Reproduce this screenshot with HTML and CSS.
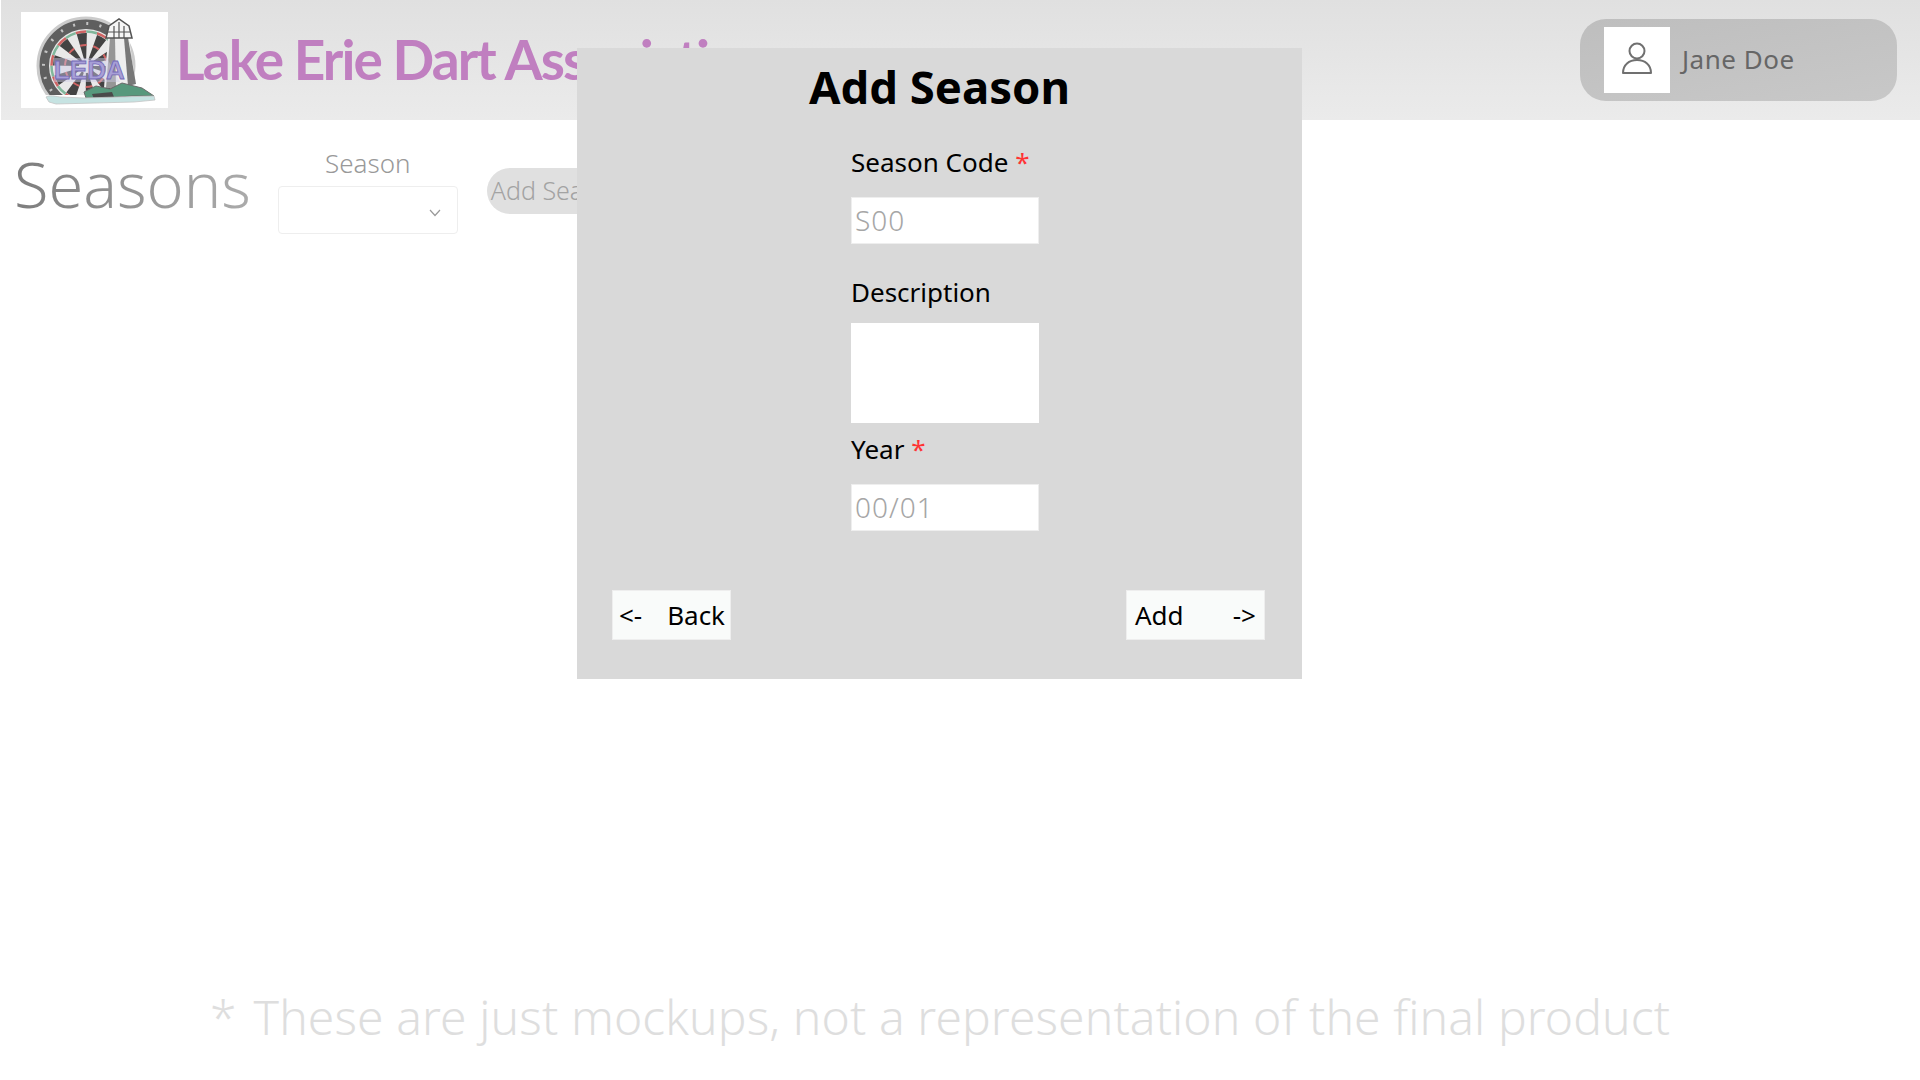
FILE: index.html
```html
<!DOCTYPE html>
<html lang="en">
<head>
    <meta charset="UTF-8">
    <title>Seasons</title>
    <link rel="stylesheet" href="styles.css">
</head>
<body>
    <header class="topbar">
        <div class="logo">
            <svg width="147" height="96" viewBox="0 0 147 96">
                <defs>
                    <filter id="soft"><feGaussianBlur stdDeviation="0.6"/></filter>
                    <clipPath id="boardClip"><rect x="0" y="0" width="147" height="83"/></clipPath>
                </defs>
                <g filter="url(#soft)" transform="translate(-5 0)" opacity=".88">
                    <g clip-path="url(#boardClip)">
                        <circle cx="70" cy="54" r="48" fill="#4a4a4a" stroke="#c4c4c4" stroke-width="3"/>
                        <circle cx="70" cy="54" r="42.500" fill="none" stroke="#bdbdbd" stroke-width="3" stroke-dasharray="2 11.350"/>
                        <circle cx="70" cy="54" r="37" fill="#e6e6e6"/>
                        <circle cx="70" cy="54" r="34.500" fill="none" stroke="#c9504f" stroke-width="2.500" stroke-dasharray="10.840 10.840"/>
                        <circle cx="70" cy="54" r="34.500" fill="none" stroke="#6fae8e" stroke-width="2.500" stroke-dasharray="10.840 10.840" stroke-dashoffset="10.840"/>
                        <circle cx="70" cy="54" r="20" fill="none" stroke="#2b2b2b" stroke-width="26" stroke-dasharray="6.280 6.280"/>
                        <circle cx="70" cy="54" r="21" fill="none" stroke="#c9504f" stroke-width="2" stroke-dasharray="6.600 6.600"/>
                    </g>
                    <path d="M92 26 L113 26 L120 72 L88 76 Z" fill="#ececec"/>
                    <path d="M94 26 L90 76 L100 76 L99 26 Z" fill="#888"/>
                    <path d="M108 26 L112 74 L120 72 L112 26 Z" fill="#666"/>
                    <path d="M90 26 L116 26 L113 14 L103 7 L93 14 Z" fill="#f4f4f4" stroke="#3c3c3c" stroke-width="1.500"/>
                    <path d="M92 20 H114 M98 14 V26 M103 10 V26 M108 14 V26" stroke="#3c3c3c" stroke-width="1.200"/>
                    <path d="M68 80 L80 74 L94 77 L106 71 L126 76 L138 84 L116 84 L88 86 L70 86 Z" fill="#3f8a6a" stroke="#555"/>
                    <path d="M76 82 L96 80 L98 85 L78 87 Z" fill="#333"/>
                    <path d="M30 85 C34 83 38 84 44 85 L68 86 L138 84 L139 88 L118 90 L40 92 L33 90 Z" fill="#bfe0df" stroke="#bbb" stroke-width=".8"/>
                </g>
                <path d="M33 46 H86 L99 70 H33 Z" fill="#cfcbe6" opacity=".45"/>
                <text x="33" y="67" class="logo-text">LEDA</text>
            </svg>
        </div>
        <div class="brand">Lake Erie Dart Association</div>
        <div class="user">
            <div class="avatar">
                <svg width="32" height="50" viewBox="0 0 32 50">
                    <circle cx="16" cy="16" r="7.500" fill="none" stroke="#707070" stroke-width="2"/>
                    <path d="M2 38 C2 30 8 25 16 25 C24 25 30 30 30 38 Z" fill="none" stroke="#707070" stroke-width="2" stroke-linejoin="round"/>
                </svg>
            </div>
            <span class="user-name">Jane Doe</span>
        </div>
    </header>

    <main class="toolbar">
        <h1 class="page-title">Seasons</h1>
        <div class="season-picker">
            <label class="picker-label">Season</label>
            <div class="picker-box">
                <svg width="12" height="8" viewBox="0 0 12 8"><path d="M1 1 L6 6.500 L11 1" fill="none" stroke="#999" stroke-width="1.200"/></svg>
            </div>
        </div>
        <button class="add-pill">Add Season</button>
    </main>

    <p class="note"><span class="note-star">*</span>These are just mockups, not a representation of the final product</p>

    <section class="modal">
        <h2 class="modal-title">Add Season</h2>
        <form class="modal-form">
            <label class="field-label field-first">Season Code <span class="req">*</span></label>
            <input class="field-input" type="text" placeholder="S00">
            <label class="field-label field-desc">Description</label>
            <textarea class="field-area"></textarea>
            <label class="field-label field-year">Year <span class="req">*</span></label>
            <input class="field-input" type="text" placeholder="00/01">
        </form>
        <div class="modal-actions">
            <button class="nav-btn nav-back"><span>&lt;-</span><span>Back</span></button>
            <button class="nav-btn nav-add"><span>Add</span><span>-&gt;</span></button>
        </div>
    </section>
</body>
</html>
```

FILE: styles.css
```css
* {
    box-sizing: border-box;
}
body {
    margin: 0;
    height: 1080px;
    overflow: hidden;
    position: relative;
    display: flex;
    flex-direction: column;
    background-color: #fff;
    font-family: "Noto Sans", "Liberation Sans", sans-serif;
}
.topbar {
    display: flex;
    align-items: center;
    height: 120px;
    margin-left: 1px;
    padding: 0 23px 0 20px;
    background: linear-gradient(#e0e0e0, #ebebeb);
}
.logo {
    width: 147px;
    height: 96px;
    background-color: #fff;
}
.logo-text {
    font-family: "Liberation Sans", sans-serif;
    font-size: 26px;
    font-weight: 700;
    fill: #a79fd6;
    stroke: #7468b6;
    stroke-width: 0.8;
}
.brand {
    margin-left: 8px;
    padding-bottom: 2px;
    font-family: "Lato", sans-serif;
    font-size: 55px;
    font-weight: 700;
    letter-spacing: -1.9px;
    color: #c07fc0;
}
.user {
    display: flex;
    align-items: center;
    width: 317px;
    height: 82px;
    margin-left: auto;
    padding-left: 24px;
    border-radius: 26px;
    background: linear-gradient(170deg, #bebebe, #c8c8c8);
}
.avatar {
    display: flex;
    align-items: center;
    justify-content: center;
    width: 66px;
    height: 66px;
    background-color: #fff;
}
.user-name {
    margin-left: 12px;
    padding-bottom: 2px;
    font-size: 26px;
    letter-spacing: 0.5px;
    color: #666;
}
.toolbar {
    display: flex;
    align-items: flex-start;
    padding: 24px 0 0 14px;
}
.page-title {
    margin: 0;
    font-size: 63px;
    font-weight: 300;
    line-height: 80px;
    background: linear-gradient(90deg, #7d7d7d, #ababab);
    -webkit-background-clip: text;
    background-clip: text;
    color: transparent;
}
.season-picker {
    margin: 4px 0 0 27px;
    width: 180px;
    text-align: center;
}
.picker-label {
    display: block;
    font-size: 26px;
    line-height: 30px;
    margin-bottom: 8px;
    font-weight: 300;
    color: #999;
}
.picker-box {
    display: flex;
    align-items: center;
    justify-content: flex-end;
    height: 48px;
    padding: 6px 16px 0 0;
    border: 1px solid #eee;
    border-radius: 4px;
    background-color: #fff;
}
.add-pill {
    margin: 24px 0 0 29px;
    width: 200px;
    height: 46px;
    padding: 0 0 2px 4px;
    border: none;
    border-radius: 23px;
    background-color: #e0e0e0;
    font-family: inherit;
    font-size: 25px;
    font-weight: 300;
    text-align: left;
    color: #a3a3a3;
}
.note {
    margin: auto 0 34px 210px;
    font-size: 48px;
    font-weight: 300;
    line-height: 58px;
    letter-spacing: 0.1px;
    color: #dedede;
}
.note-star {
    margin-right: 17px;
}
.modal {
    position: absolute;
    left: 577px;
    top: 48px;
    width: 725px;
    height: 631px;
    display: flex;
    flex-direction: column;
    background-color: #d9d9d9;
}
.modal-title {
    margin: 8px 0 0;
    font-size: 45.500px;
    line-height: 60px;
    font-weight: 700;
    text-align: center;
    color: #000;
}
.modal-form {
    display: flex;
    flex-direction: column;
    align-items: flex-start;
    padding-left: 274px;
}
.field-label {
    font-size: 26px;
    line-height: 32px;
    color: #000;
}
.field-first {
    margin-top: 30px;
}
.field-desc {
    margin-top: 32px;
}
.field-year {
    margin-top: 10px;
}
.req {
    color: #f33;
}
.field-input, .field-area {
    display: block;
    width: 188px;
    border: 1px solid #eee;
    border-radius: 0;
    background-color: #fff;
    font-family: inherit;
    outline: none;
}
.field-input {
    height: 47px;
    margin-top: 19px;
    padding: 0 3px 2px;
    font-size: 28px;
    font-weight: 300;
    letter-spacing: 1px;
}
.field-input::placeholder {
    color: #a6a6a6;
}
.field-area {
    height: 100px;
    margin-top: 15px;
    resize: none;
    border: none;
}
.modal-actions {
    display: flex;
    justify-content: space-between;
    padding: 59px 37px 0 35px;
}
.nav-btn {
    display: flex;
    align-items: center;
    justify-content: space-between;
    height: 50px;
    padding-bottom: 2px;
    border: 1px solid #eee;
    background-color: #f9fbfa;
    font-family: inherit;
    font-size: 26px;
    color: #000;
}
.nav-back {
    width: 119px;
    padding-left: 6px;
    padding-right: 5px;
}
.nav-add {
    width: 139px;
    padding-left: 8px;
    padding-right: 8px;
}
```
